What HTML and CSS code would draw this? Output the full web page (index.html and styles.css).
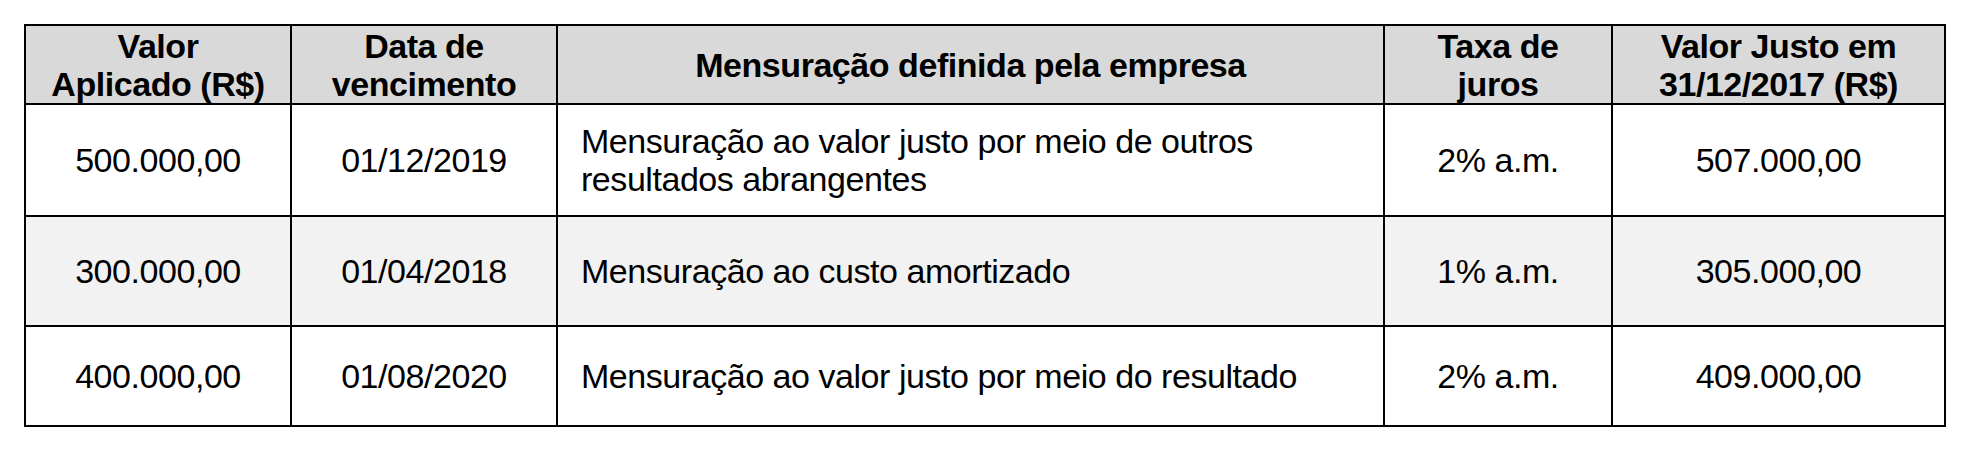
FILE: index.html
```html
<!DOCTYPE html>
<html lang="pt-BR">
<head>
<meta charset="utf-8">
<title>Tabela</title>
<link rel="stylesheet" href="styles.css">
</head>
<body>
<div class="page">
  <table class="grid">
    <colgroup>
      <col class="c1"><col class="c2"><col class="c3"><col class="c4"><col class="c5">
    </colgroup>
    <thead>
      <tr class="r-head">
        <th>Valor<br>Aplicado (R$)</th>
        <th>Data de<br>vencimento</th>
        <th>Mensuração definida pela empresa</th>
        <th>Taxa de<br>juros</th>
        <th>Valor Justo em<br>31/12/2017 (R$)</th>
      </tr>
    </thead>
    <tbody>
      <tr class="r1">
        <td>500.000,00</td>
        <td>01/12/2019</td>
        <td class="left">Mensuração ao valor justo por meio de outros<br>resultados abrangentes</td>
        <td>2% a.m.</td>
        <td>507.000,00</td>
      </tr>
      <tr class="r2 shade">
        <td>300.000,00</td>
        <td>01/04/2018</td>
        <td class="left">Mensuração ao custo amortizado</td>
        <td>1% a.m.</td>
        <td>305.000,00</td>
      </tr>
      <tr class="r3">
        <td>400.000,00</td>
        <td>01/08/2020</td>
        <td class="left">Mensuração ao valor justo por meio do resultado</td>
        <td>2% a.m.</td>
        <td>409.000,00</td>
      </tr>
    </tbody>
  </table>
</div>
</body>
</html>
```
FILE: styles.css
```css
html, body {
  margin: 0;
  padding: 0;
  background: #ffffff;
}

.page {
  padding: 24px 0 0 24px;
}

.grid {
  border-collapse: collapse;
  table-layout: fixed;
  width: 1920px;
  font-family: "Liberation Sans", Arial, sans-serif;
  font-size: 34px;
  letter-spacing: -0.45px;
  line-height: 38px;
  color: #000000;
  border: 2px solid #000000;
}

.c1 { width: 266px; }
.c2 { width: 266px; }
.c3 { width: 827px; }
.c4 { width: 228px; }
.c5 { width: 333px; }

.grid th,
.grid td {
  border: 2px solid #000000;
  padding: 0 10px;
  text-align: center;
  vertical-align: middle;
  white-space: nowrap;
}

.grid th {
  background: #d9d9d9;
  font-weight: bold;
}

.grid td.left {
  text-align: left;
  padding-left: 23px;
}

.r-head { height: 79px; }
.r1 { height: 112px; }
.r2 { height: 110px; }
.r3 { height: 100px; }

.shade td {
  background: #f2f2f2;
}
```
